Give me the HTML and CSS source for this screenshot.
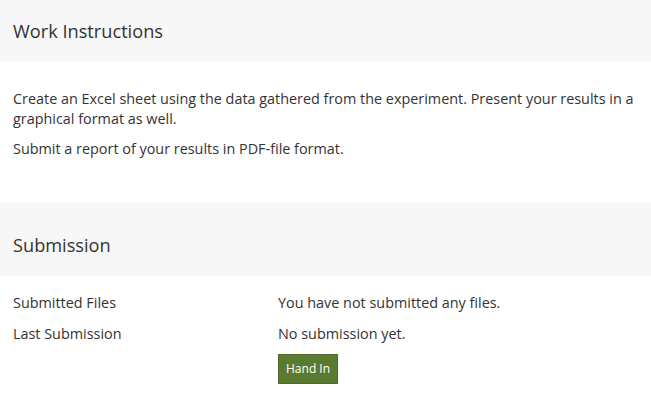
FILE: index.html
```html
<!DOCTYPE html>
<html>
<head>
<meta charset="utf-8">
<link rel="stylesheet" href="styles.css">
</head>
<body>
<section class="panel">
  <header class="panel-head"><h2 class="panel-title">Work Instructions</h2></header>
  <div class="panel-body instructions">
    <p>Create an Excel sheet using the data gathered from the experiment. Present your results in a graphical format as well.</p>
    <p>Submit a report of your results in PDF-file format.</p>
  </div>
</section>
<section class="panel">
  <header class="panel-head submission-head"><h2 class="panel-title">Submission</h2></header>
  <div class="panel-body">
    <div class="details">
      <div class="label">Submitted Files</div>
      <div class="value">You have not submitted any files.</div>
      <div class="label">Last Submission</div>
      <div class="value">No submission yet.</div>
      <div class="label"></div>
      <div class="value"><button class="btn">Hand In</button></div>
    </div>
  </div>
</section>
</body>
</html>
```
FILE: styles.css
```css
html, body {
  margin: 0;
  padding: 0;
  background: #fff;
}
body {
  font-family: "Open Sans", "Liberation Sans", sans-serif;
  font-size: 14.4px;
  line-height: 20px;
  color: #333;
  width: 651px;
}
.panel-head {
  background: #f7f7f7;
  height: 61px;
  padding: 0 13px;
  display: flex;
  align-items: center;
}
.panel-title {
  margin: 0;
  font-size: 18.2px;
  font-weight: 400;
  line-height: 24px;
  color: #333;
}
.instructions {
  padding: 28px 13px 25px;
}
.instructions p {
  margin: 0 0 10px;
}
.submission-head {
  margin-top: 9px;
  height: 73px;
  padding-top: 10px;
  box-sizing: border-box;
}
.details {
  padding: 17px 13px 0;
  display: grid;
  grid-template-columns: 265px 1fr;
  row-gap: 11px;
}
.btn {
  font-family: "Open Sans", "Liberation Sans", sans-serif;
  font-size: 12px;
  line-height: 16px;
  color: #fff;
  background: #5a7b2f;
  border: 1px solid #4f6d28;
  padding: 6px 7px;
  border-radius: 0;
  margin-top: -1px;
}
```
